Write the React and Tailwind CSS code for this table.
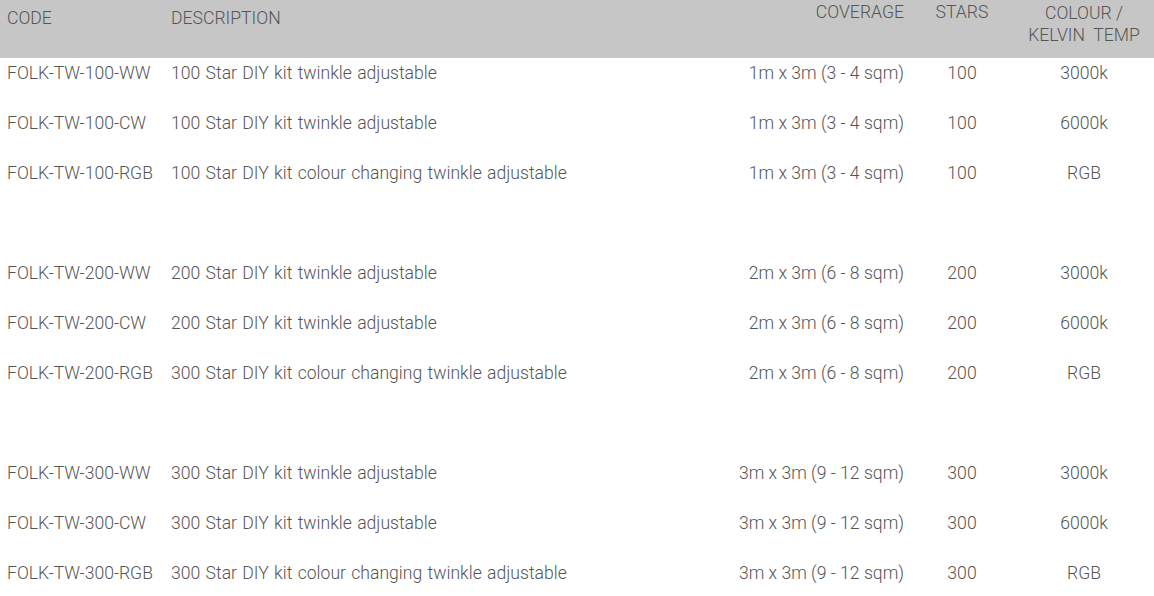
import React from 'react';

const rows = [
    ['FOLK-TW-100-WW', '100 Star DIY kit twinkle adjustable', '1m x 3m (3 - 4 sqm)', '100', '3000k'],
    ['FOLK-TW-100-CW', '100 Star DIY kit twinkle adjustable', '1m x 3m (3 - 4 sqm)', '100', '6000k'],
    ['FOLK-TW-100-RGB', '100 Star DIY kit colour changing twinkle adjustable', '1m x 3m (3 - 4 sqm)', '100', 'RGB'],
    null,
    ['FOLK-TW-200-WW', '200 Star DIY kit twinkle adjustable', '2m x 3m (6 - 8 sqm)', '200', '3000k'],
    ['FOLK-TW-200-CW', '200 Star DIY kit twinkle adjustable', '2m x 3m (6 - 8 sqm)', '200', '6000k'],
    ['FOLK-TW-200-RGB', '300 Star DIY kit colour changing twinkle adjustable', '2m x 3m (6 - 8 sqm)', '200', 'RGB'],
    null,
    ['FOLK-TW-300-WW', '300 Star DIY kit twinkle adjustable', '3m x 3m (9 - 12 sqm)', '300', '3000k'],
    ['FOLK-TW-300-CW', '300 Star DIY kit twinkle adjustable', '3m x 3m (9 - 12 sqm)', '300', '6000k'],
    ['FOLK-TW-300-RGB', '300 Star DIY kit colour changing twinkle adjustable', '3m x 3m (9 - 12 sqm)', '300', 'RGB'],
];

const App = () => {
    return (
        <div className="w-[1154px] h-[596px] overflow-hidden bg-white text-[#555555] text-[17.6px] leading-[20px] font-light" style={{ fontFamily: 'Roboto, "Liberation Sans", sans-serif' }}>
            {/* Header */}
            <div className="flex h-[58px] bg-[#c6c6c6]">
                <div className="w-[164px] pl-[7px] pt-[8px]">CODE</div>
                <div className="flex-1 pl-[7px] pt-[8px]">DESCRIPTION</div>
                <div className="text-right pt-[2px] pr-[1px]">COVERAGE</div>
                <div className="w-[114px] text-center pt-[2px]">STARS</div>
                <div className="w-[135px] text-center pt-[2px] pr-[5px] leading-[22px]">
                    COLOUR /<br />KELVIN&nbsp; TEMP
                </div>
            </div>

            {/* Body */}
            {rows.map((r, i) =>
                r ? (
                    <div key={i} className="flex h-[50px] pt-[5px]">
                        <div className="w-[164px] pl-[7px] whitespace-nowrap">{r[0]}</div>
                        <div className="flex-1 pl-[7px] whitespace-nowrap [word-spacing:1px]">{r[1]}</div>
                        <div className="text-right pr-[1px] whitespace-nowrap">{r[2]}</div>
                        <div className="w-[114px] text-center">{r[3]}</div>
                        <div className="w-[135px] text-center pr-[5px]">{r[4]}</div>
                    </div>
                ) : (
                    <div key={i} className="h-[50px]" />
                )
            )}
        </div>
    );
};

export default App;
